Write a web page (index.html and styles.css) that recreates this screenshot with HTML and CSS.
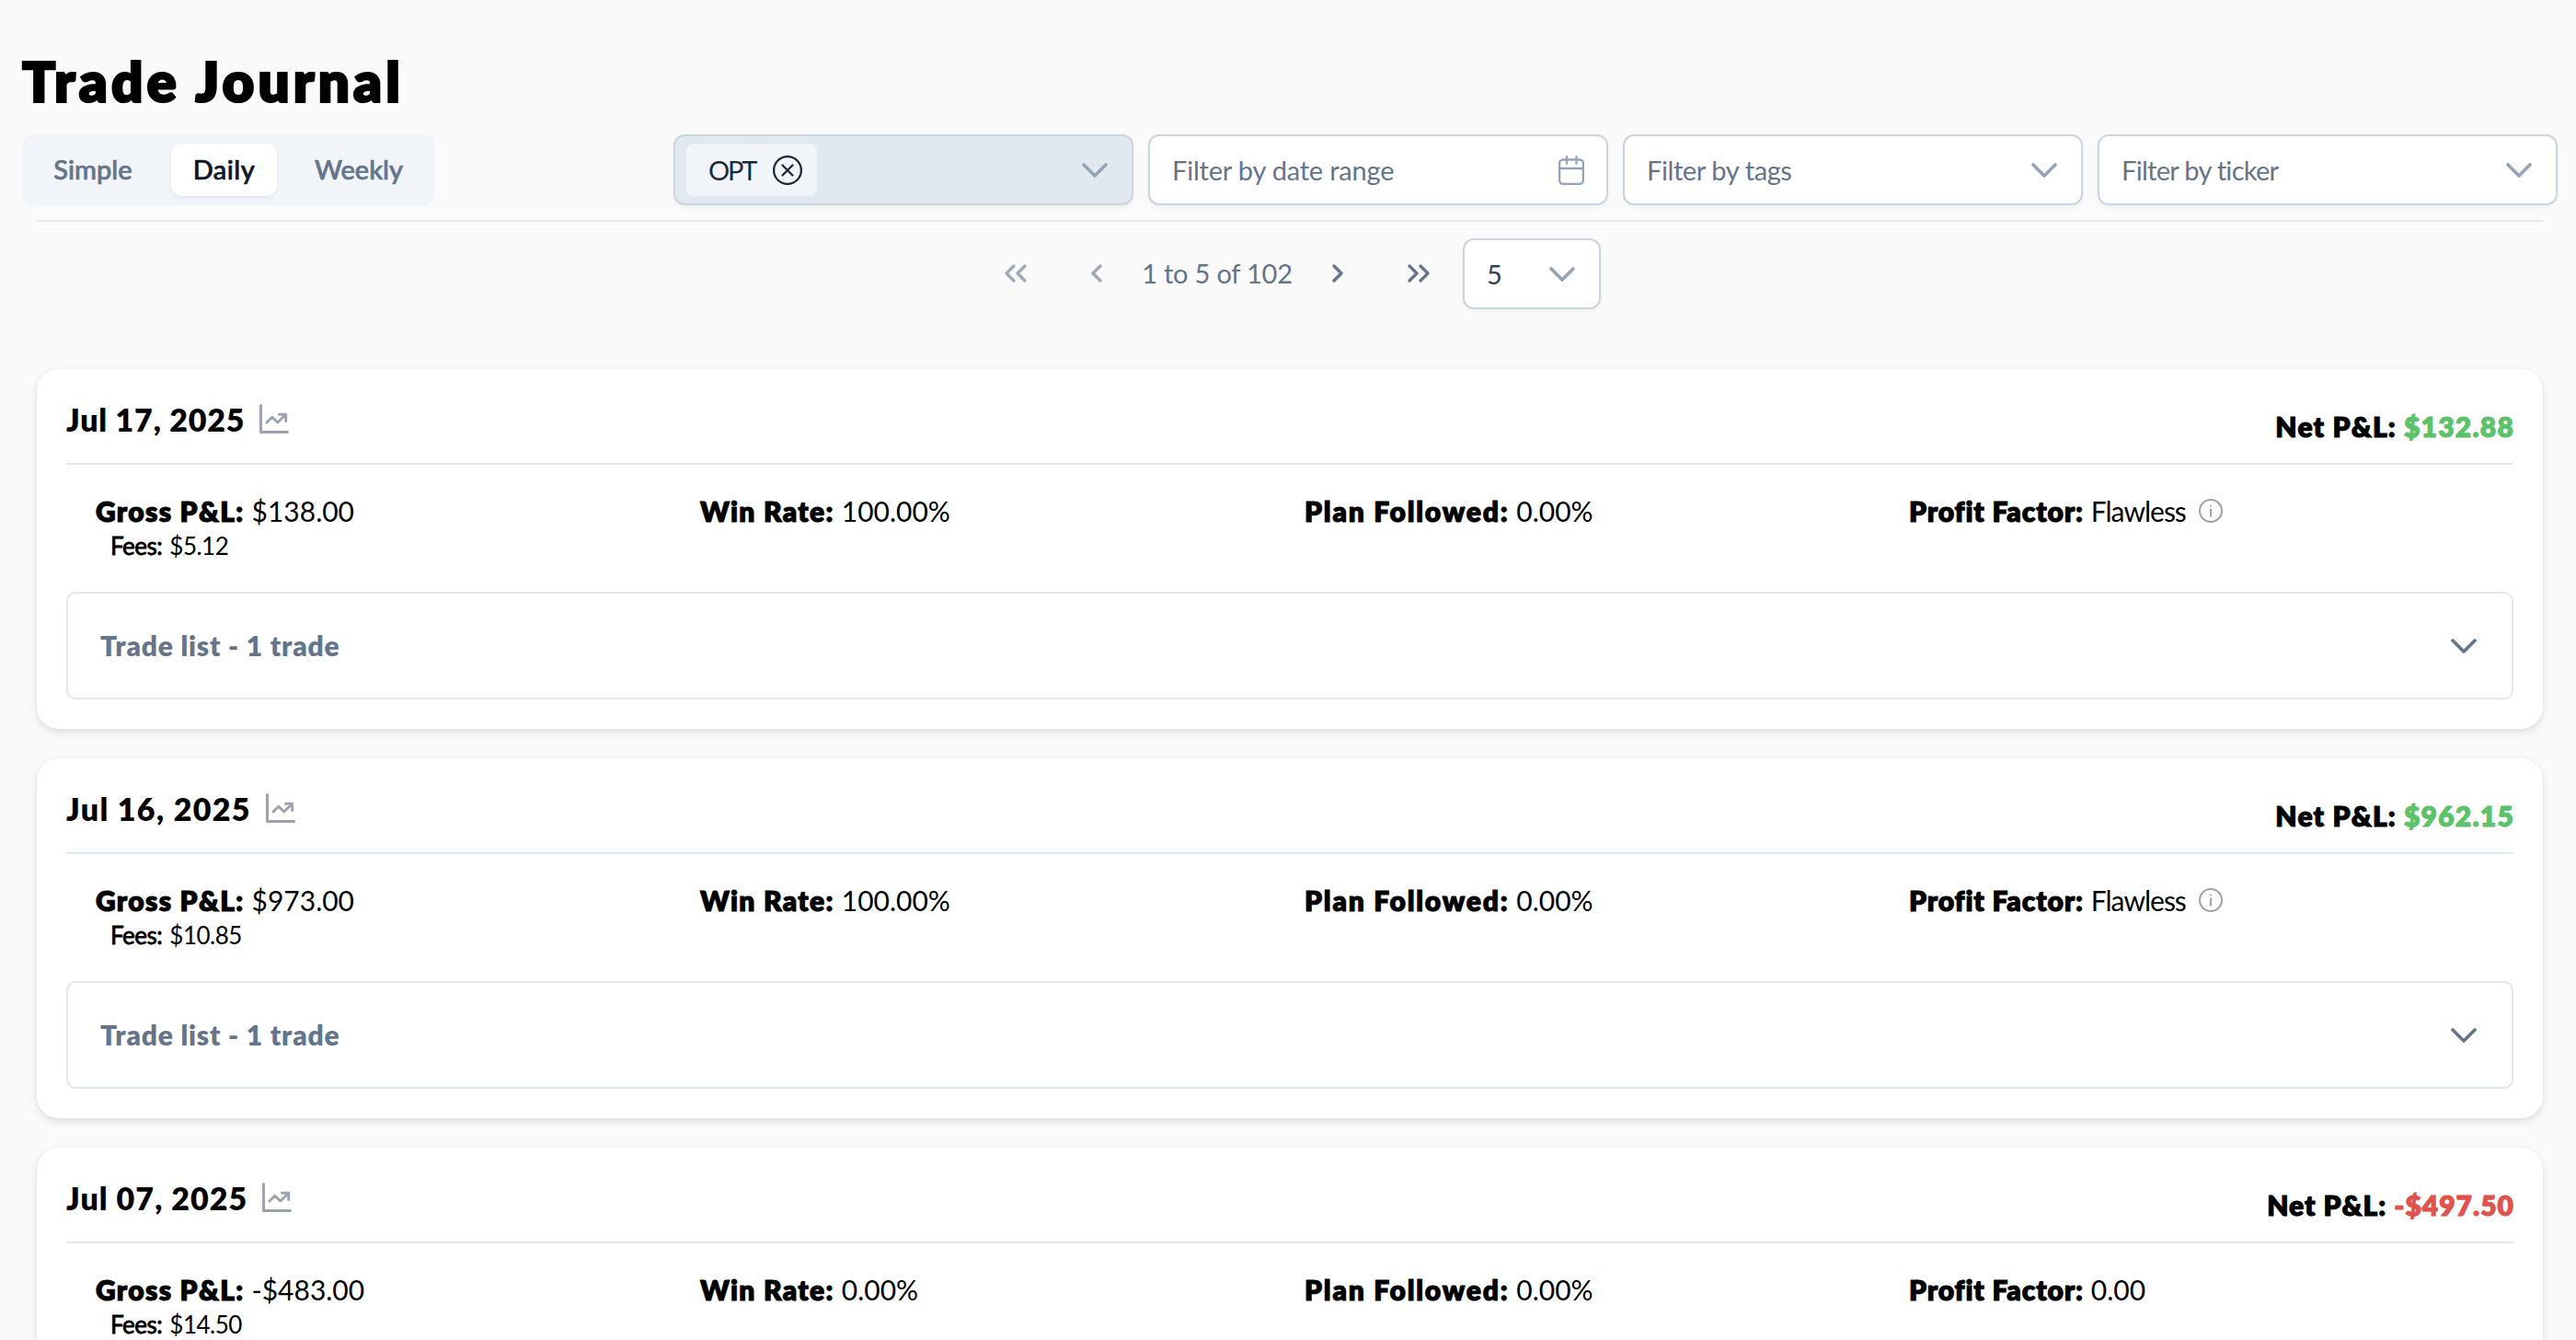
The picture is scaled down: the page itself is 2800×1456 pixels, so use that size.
FILE: index.html
```html
<!DOCTYPE html>
<html lang="en">
<head>
    <meta charset="UTF-8">
    <meta name="viewport" content="width=device-width, initial-scale=1.0">
    <title>Trade Journal</title>
    <link rel="stylesheet" href="styles.css">
</head>
<body>
    <!-- Shared icons -->
    <svg class="icon-defs" aria-hidden="true">
        <symbol id="chevron-down" viewBox="0 0 28 28">
            <path d="M2 8 L14 20 L26 8" />
        </symbol>
        <symbol id="angle-left" viewBox="0 0 12 20">
            <path d="M10 2 L2 10 L10 18" />
        </symbol>
        <symbol id="angle-right" viewBox="0 0 12 20">
            <path d="M2 2 L10 10 L2 18" />
        </symbol>
        <symbol id="angle-double-left" viewBox="0 0 24 20">
            <path d="M10 2 L2 10 L10 18 M22 2 L14 10 L22 18" />
        </symbol>
        <symbol id="angle-double-right" viewBox="0 0 24 20">
            <path d="M2 2 L10 10 L2 18 M14 2 L22 10 L14 18" />
        </symbol>
        <symbol id="chart-line" viewBox="0 0 32 32">
            <path d="M1.5 1.5 V30.5 H30.5 M8 20 L13.8 14.3 L19.8 20 L28.5 11.5 M21.5 11.3 H28.7 V18.5" />
        </symbol>
        <symbol id="info-circle" viewBox="0 0 26 26">
            <circle cx="13" cy="13" r="12" />
            <path d="M13 7.4 V7.6 M13 11.5 V18.8" />
        </symbol>
        <symbol id="times-circle" viewBox="0 0 32 32">
            <circle cx="16" cy="16" r="14.9" />
            <path d="M10.5 10.5 L21.5 21.5 M21.5 10.5 L10.5 21.5" />
        </symbol>
        <symbol id="calendar" viewBox="0 0 28 32">
            <rect x="1.1" y="4.5" width="25.8" height="26.3" rx="4" />
            <path d="M1 14 H27 M9 1.2 V8.8 M19.5 1.2 V8.8" />
        </symbol>
    </svg>

    <h1 class="page-title">Trade Journal</h1>

    <div class="toolbar">
        <div class="view-toggle">
            <button class="toggle-btn toggle-simple">Simple</button>
            <button class="toggle-btn toggle-daily active">Daily</button>
            <button class="toggle-btn toggle-weekly">Weekly</button>
        </div>
        <div class="filters">
            <div class="filter disabled">
                <span class="chip"><span class="chip-label">OPT</span><svg class="icon times"><use href="#times-circle"/></svg></span>
                <svg class="icon chevron"><use href="#chevron-down"/></svg>
            </div>
            <div class="filter with-calendar">
                <span class="filter-date">Filter by date range</span>
                <svg class="icon calendar"><use href="#calendar"/></svg>
            </div>
            <div class="filter">
                <span class="filter-tags">Filter by tags</span>
                <svg class="icon chevron"><use href="#chevron-down"/></svg>
            </div>
            <div class="filter">
                <span class="filter-ticker">Filter by ticker</span>
                <svg class="icon chevron"><use href="#chevron-down"/></svg>
            </div>
        </div>
    </div>

    <div class="content">
        <div class="paginator">
            <button class="page-btn" disabled><svg class="icon angle-double"><use href="#angle-double-left"/></svg></button>
            <button class="page-btn" disabled><svg class="icon angle"><use href="#angle-left"/></svg></button>
            <span class="page-report">1 to 5 of 102</span>
            <button class="page-btn"><svg class="icon angle"><use href="#angle-right"/></svg></button>
            <button class="page-btn"><svg class="icon angle-double"><use href="#angle-double-right"/></svg></button>
            <div class="filter page-size">
                <span>5</span>
                <svg class="icon chevron"><use href="#chevron-down"/></svg>
            </div>
        </div>

        <div class="card">
            <div class="card-header">
                <div class="card-date">Jul 17, 2025 <svg class="icon chart"><use href="#chart-line"/></svg></div>
                <div class="card-net"><span>Net P&amp;L:</span><span class="profit">$132.88</span></div>
            </div>
            <div class="stats">
                <div class="stat">
                    <div class="stat-row"><span class="stat-label">Gross P&amp;L:</span><span>$138.00</span></div>
                    <div class="fees"><span class="fees-label">Fees:</span><span>$5.12</span></div>
                </div>
                <div class="stat">
                    <div class="stat-row"><span class="stat-label">Win Rate:</span><span>100.00%</span></div>
                </div>
                <div class="stat">
                    <div class="stat-row"><span class="stat-label plan">Plan Followed:</span><span>0.00%</span></div>
                </div>
                <div class="stat">
                    <div class="stat-row"><span class="stat-label factor">Profit Factor:</span><span class="flawless">Flawless</span><svg class="icon info"><use href="#info-circle"/></svg></div>
                </div>
            </div>
            <div class="trade-list">
                <span class="trade-count">Trade list - 1 trade</span>
                <svg class="icon chevron"><use href="#chevron-down"/></svg>
            </div>
        </div>

        <div class="card">
            <div class="card-header">
                <div class="card-date wide">Jul 16, 2025 <svg class="icon chart"><use href="#chart-line"/></svg></div>
                <div class="card-net"><span>Net P&amp;L:</span><span class="profit">$962.15</span></div>
            </div>
            <div class="stats">
                <div class="stat">
                    <div class="stat-row"><span class="stat-label">Gross P&amp;L:</span><span>$973.00</span></div>
                    <div class="fees"><span class="fees-label">Fees:</span><span>$10.85</span></div>
                </div>
                <div class="stat">
                    <div class="stat-row"><span class="stat-label">Win Rate:</span><span>100.00%</span></div>
                </div>
                <div class="stat">
                    <div class="stat-row"><span class="stat-label plan">Plan Followed:</span><span>0.00%</span></div>
                </div>
                <div class="stat">
                    <div class="stat-row"><span class="stat-label factor">Profit Factor:</span><span class="flawless">Flawless</span><svg class="icon info"><use href="#info-circle"/></svg></div>
                </div>
            </div>
            <div class="trade-list">
                <span class="trade-count">Trade list - 1 trade</span>
                <svg class="icon chevron"><use href="#chevron-down"/></svg>
            </div>
        </div>

        <div class="card">
            <div class="card-header">
                <div class="card-date medium">Jul 07, 2025 <svg class="icon chart"><use href="#chart-line"/></svg></div>
                <div class="card-net loss-net"><span>Net P&amp;L:</span><span class="loss">-$497.50</span></div>
            </div>
            <div class="stats">
                <div class="stat">
                    <div class="stat-row"><span class="stat-label">Gross P&amp;L:</span><span>-$483.00</span></div>
                    <div class="fees"><span class="fees-label">Fees:</span><span>$14.50</span></div>
                </div>
                <div class="stat">
                    <div class="stat-row"><span class="stat-label">Win Rate:</span><span>0.00%</span></div>
                </div>
                <div class="stat">
                    <div class="stat-row"><span class="stat-label plan">Plan Followed:</span><span>0.00%</span></div>
                </div>
                <div class="stat">
                    <div class="stat-row"><span class="stat-label factor">Profit Factor:</span><span>0.00</span></div>
                </div>
            </div>
        </div>
    </div>
</body>
</html>
```
FILE: styles.css
```css
* {
    margin: 0;
    padding: 0;
    box-sizing: border-box;
}

body {
    font-family: Lato, sans-serif;
    font-size: 30px;
    background: #fafafa;
    color: #000;
    height: 100vh;
    padding: 52px 20px 0 24px;
    overflow: hidden;
}

button {
    font: inherit;
    border: none;
    background: none;
}

/* Icons */
.icon-defs {
    display: none;
}

.icon {
    fill: none;
    stroke: currentColor;
    stroke-linecap: round;
    stroke-linejoin: round;
    flex-shrink: 0;
}

.chevron {
    width: 28px;
    height: 28px;
    stroke-width: 3.6;
}

.angle {
    width: 12px;
    height: 20px;
    stroke-width: 3.4;
}

.angle-double {
    width: 24px;
    height: 20px;
    stroke-width: 3.2;
}

.chart {
    width: 32px;
    height: 32px;
    stroke-width: 3;
    color: #9ca3af;
}

.info {
    width: 26px;
    height: 26px;
    stroke-width: 2;
    color: #9ca3af;
    margin-left: 6px;
}

.times {
    width: 32px;
    height: 32px;
    stroke-width: 2.3;
}

.calendar {
    width: 28px;
    height: 32px;
    stroke-width: 2.3;
}

/* Header */
.page-title {
    font-size: 60px;
    font-weight: 800;
    line-height: 72px;
    letter-spacing: 4.1px;
    margin-bottom: 22px;
    -webkit-text-stroke: 2.2px currentColor;
}

.toolbar {
    display: flex;
    justify-content: space-between;
}

.view-toggle {
    display: flex;
    gap: 16px;
    padding: 10px;
    background: #f1f5f9;
    border-radius: 12px;
}

.toggle-btn {
    font-size: 29px;
    font-weight: 500;
    color: #64748b;
    padding-bottom: 2px;
    border-radius: 12px;
    -webkit-text-stroke: 0.7px currentColor;
}

.toggle-simple {
    width: 136px;
    padding-right: 2px;
}

.toggle-daily {
    width: 115px;
    letter-spacing: 0.5px;
}

.toggle-weekly {
    width: 146px;
}

.toggle-btn.active {
    background: #fff;
    color: #0f172a;
    box-shadow: 0 2px 4px rgba(0, 0, 0, 0.06);
}

.filters {
    display: flex;
    gap: 16px;
}

.filter {
    display: flex;
    align-items: center;
    justify-content: space-between;
    width: 500px;
    height: 77px;
    padding: 0 26px 0 24px;
    font-size: 29px;
    color: #64748b;
    background: #fff;
    border: 2px solid #cbd5e1;
    border-radius: 12px;
    box-shadow: 0 2px 4px rgba(18, 18, 23, 0.05);
}

.filter.disabled {
    background: #e2e8f0;
    padding-left: 12px;
}

.filter.with-calendar {
    padding-right: 24px;
}

.filter .icon {
    color: #94a3b8;
}

.filter-date {
    letter-spacing: -0.2px;
}

.filter-tags {
    letter-spacing: -0.4px;
}

.filter-ticker {
    letter-spacing: -0.7px;
}

.chip {
    display: flex;
    align-items: center;
    justify-content: space-between;
    width: 142px;
    height: 57px;
    padding: 0 16px 0 24px;
    background: #f1f5f9;
    color: #1e293b;
    border-radius: 8px;
}

.chip-label {
    letter-spacing: -2.2px;
}

.chip .icon {
    color: #1e293b;
}

/* Content */
.content {
    margin: 16px 16px 0;
    border-top: 2px solid #e2e6ee;
}

.paginator {
    display: flex;
    align-items: center;
    justify-content: center;
    gap: 8px;
    height: 77px;
    margin: 18px 0 65px;
    color: #64748b;
}

.page-btn {
    display: flex;
    align-items: center;
    justify-content: center;
    width: 80px;
    height: 75px;
    padding-bottom: 1px;
    color: #64748b;
}

.page-btn:disabled {
    opacity: 0.6;
}

.page-report {
    width: 166px;
    padding-bottom: 2px;
    font-size: 29px;
    letter-spacing: -0.2px;
    text-align: center;
    white-space: nowrap;
}

.page-size {
    width: 150px;
    color: #334155;
}

/* Day cards */
.card {
    padding: 32px;
    margin-bottom: 32px;
    background: #fff;
    border-radius: 24px;
    box-shadow: 0 4px 10px rgba(0, 0, 0, 0.1), 0 0 4px rgba(0, 0, 0, 0.04);
}

.card:last-child {
    margin-bottom: 0;
    padding-bottom: 0;
}

.card-header {
    display: flex;
    justify-content: space-between;
    height: 72px;
    border-bottom: 2px solid #e2e8f0;
}

.card-date {
    display: flex;
    align-items: center;
    gap: 16px;
    height: 44px;
    font-size: 34px;
    font-weight: 800;
    letter-spacing: 0.8px;
}

.card-date.medium {
    letter-spacing: 1.05px;
}

.card-date.wide {
    letter-spacing: 1.35px;
}

.card-net {
    display: flex;
    gap: 8px;
    margin: 8px -1px 0 0;
    line-height: 44px;
    font-weight: 800;
    letter-spacing: 1.2px;
    -webkit-text-stroke: 1px currentColor;
}

.card-net.loss-net {
    letter-spacing: 1px;
}

.profit {
    color: #5bc26a;
}

.loss {
    color: #e0524d;
}

.stats {
    display: grid;
    grid-template-columns: repeat(4, 1fr);
    height: 138px;
    padding: 30px 0 0 32px;
}

.stat-row {
    display: flex;
    align-items: center;
    gap: 8px;
    height: 39px;
}

.stat-label {
    font-weight: 800;
    letter-spacing: 1.3px;
    -webkit-text-stroke: 1px currentColor;
}

.stat-label.plan {
    letter-spacing: 1.75px;
}

.stat-label.factor {
    letter-spacing: 0.85px;
}

.flawless {
    letter-spacing: -1px;
}

.fees {
    display: flex;
    gap: 8px;
    margin-left: 16px;
    font-size: 26px;
    line-height: 39px;
    letter-spacing: -0.5px;
}

.fees-label {
    -webkit-text-stroke: 0.8px currentColor;
}

.trade-list {
    display: flex;
    align-items: center;
    justify-content: space-between;
    height: 117px;
    padding: 0 38px 0 35px;
    color: #64748b;
    font-weight: 800;
    letter-spacing: 0.8px;
    border: 2px solid #e2e8f0;
    border-radius: 10px;
}

.trade-count {
    padding-bottom: 2px;
}
```
